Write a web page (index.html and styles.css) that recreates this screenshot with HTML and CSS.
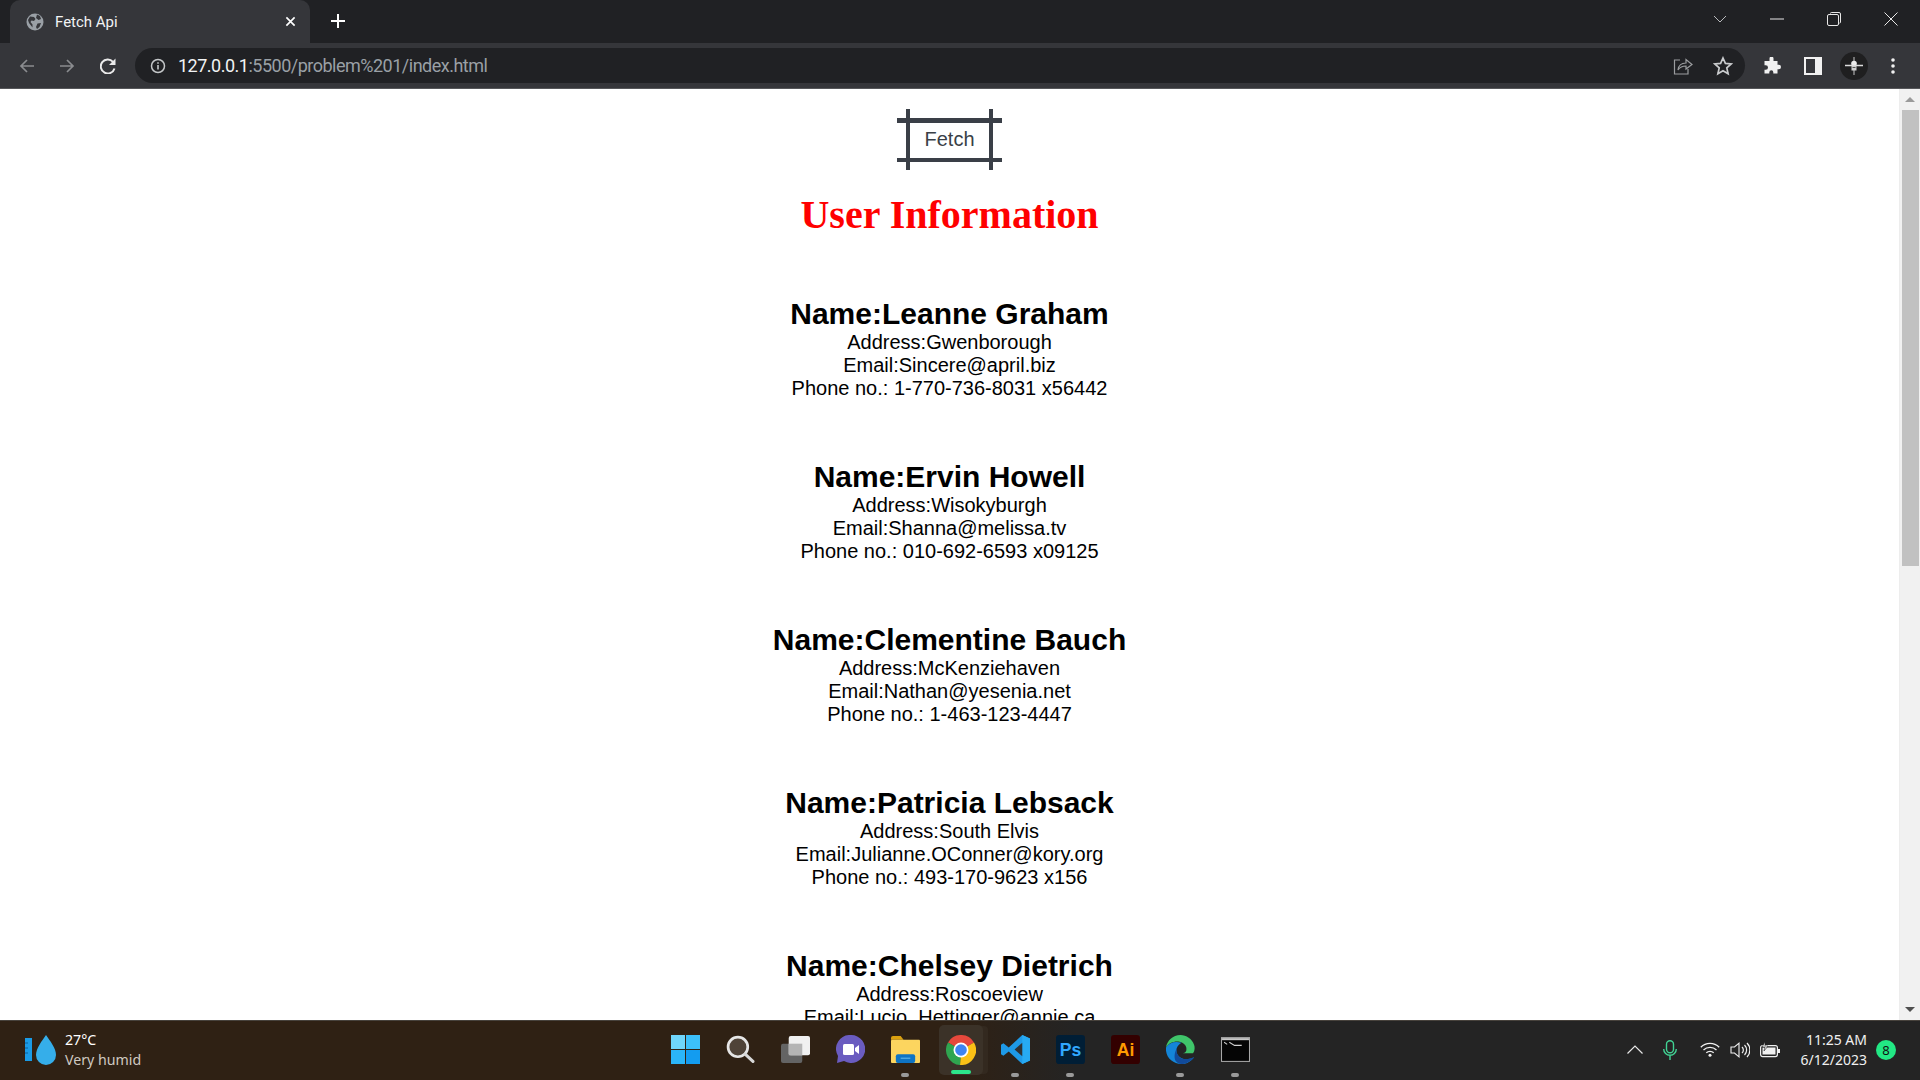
FILE: index.html
```html
<!DOCTYPE html>
<html lang="en">
<head>
<meta charset="utf-8">
<title>Fetch Api</title>
<link rel="stylesheet" href="styles.css">
</head>
<body>
<header class="chrome">
  <div class="titlebar">
    <div class="tab">
      <svg class="tab-fav" viewBox="0 0 18 18"><circle cx="9" cy="9" r="8.5" fill="#9aa0a6"/><path d="M4 3.500l4 .5 1.500 2-1.500 2-2.500-.5-1 1.500 2 2.500v3L3 10 2 7zM11 1.500l3 1.500 1 3-2.500 1L10 5zM11.500 10.500l3.500-.5-1.500 4-2.500 2-1-2z" fill="#35363a"/></svg>
      <span class="tab-title">Fetch Api</span>
      <svg class="tab-x" viewBox="0 0 12 12"><path d="M1.500 1.500l9 9M10.500 1.500l-9 9" stroke="#fff" stroke-width="1.800"/></svg>
    </div>
    <svg class="newtab" viewBox="0 0 16 16"><path d="M8 1v14M1 8h14" stroke="#fff" stroke-width="2"/></svg>
    <div class="winctl">
      <svg class="w-chev" viewBox="0 0 14 8"><path d="M1 1l6 6 6-6" fill="none" stroke="#b8babd" stroke-width="1"/></svg>
      <svg class="w-min" viewBox="0 0 14 2"><path d="M0 1h14" stroke="#e8e8e8" stroke-width="1"/></svg>
      <svg class="w-max" viewBox="0 0 14 14"><path d="M3.500 1.500V1a.8.8 0 0 1 .8-.5H12a1.500 1.500 0 0 1 1.500 1.500v8q0 1-1 1.200" fill="none" stroke="#e8e8e8"/><rect x=".5" y="2.500" width="11" height="11" rx="1.500" fill="none" stroke="#e8e8e8"/></svg>
      <svg class="w-close" viewBox="0 0 14 14"><path d="M.5.500l13 13M13.500.500l-13 13" stroke="#e8e8e8" stroke-width="1"/></svg>
    </div>
  </div>
  <div class="toolbar">
    <svg class="nav nav-back" viewBox="0 0 16 16"><path d="M15 8H2M8 2L2 8l6 6" fill="none" stroke="#8a8c8f" stroke-width="1.700"/></svg>
    <svg class="nav nav-fwd" viewBox="0 0 16 16"><path d="M1 8h13M8 2l6 6-6 6" fill="none" stroke="#8a8c8f" stroke-width="1.700"/></svg>
    <svg class="nav nav-reload" viewBox="0 0 16 16"><path d="M14.500 10.500A7 7 0 1 1 13 3.800" fill="none" stroke="#eaeaea" stroke-width="2"/><path d="M15.500 .5v6.500H9z" fill="#eaeaea"/></svg>
    <div class="omnibox">
      <svg class="info" viewBox="0 0 16 16"><circle cx="8" cy="8" r="6.500" fill="none" stroke="#c4c7c9" stroke-width="1.500"/><path d="M8 7v4.500M8 4.300v1.500" stroke="#c4c7c9" stroke-width="1.600"/></svg>
      <span class="url"><span class="url-host">127.0.0.1</span>:5500/problem%201/index.html</span>
      <svg class="share" viewBox="0 0 20 18"><path d="M7 3H1.500v14H15v-5" fill="none" stroke="#9b9d9f" stroke-width="1.200"/><path d="M5 13c.5-4.500 3.500-7 8-7V2.500L19 7.500 13 12V9c-3.500 0-6 1-8 4z" fill="none" stroke="#9b9d9f" stroke-width="1.200"/></svg>
      <svg class="star" viewBox="0 0 20 20"><path d="M10 2l2.400 5.400 5.800.6-4.400 3.900 1.300 5.800L10 14.700l-5.100 3 1.300-5.800L1.800 8l5.800-.6z" fill="none" stroke="#c9cbcd" stroke-width="1.700"/></svg>
    </div>
    <svg class="ext" viewBox="0 0 18 18"><path d="M6.500 1.500a2 2 0 0 1 4 0V4H14.500v3.800h1.300a2.200 2.200 0 0 1 0 4.400h-1.300v4.300H10.300v-1.200a2 2 0 0 0-4 0v1.200H1.500V12.800h1.200a2.300 2.300 0 0 0 0-4.600H1.500V4h5z" fill="#f1f1f1"/></svg>
    <svg class="side" viewBox="0 0 18 18"><rect width="18" height="18" fill="#f1f1f1"/><rect x="2" y="2" width="9" height="14" fill="#35363a"/></svg>
    <div class="avatar"><svg viewBox="0 0 20 20"><path d="M1 9.500h18" stroke="#dcdcdc" stroke-width="1.500"/><path d="M10 1v18" stroke="#8f8f8f" stroke-width="1.500"/><circle cx="10" cy="7.500" r="2.800" fill="#ececec"/><rect x="7.500" y="9.500" width="5" height="5" fill="#d0d0d0"/><path d="M8.500 11.500h3" stroke="#555" stroke-width="1"/></svg></div>
    <svg class="kebab" viewBox="0 0 4 16"><circle cx="2" cy="2" r="1.800" fill="#f1f1f1"/><circle cx="2" cy="8" r="1.800" fill="#f1f1f1"/><circle cx="2" cy="14" r="1.800" fill="#f1f1f1"/></svg>
  </div>
</header>

<div class="viewport">
  <main class="page">
    <button class="fetch" type="button">Fetch</button>
    <h1 class="title">User Information</h1>
    <section class="users">
      <article class="user"><h2>Name:Leanne Graham</h2><p>Address:Gwenborough</p><p>Email:Sincere@april.biz</p><p>Phone no.: 1-770-736-8031 x56442</p></article>
      <article class="user"><h2>Name:Ervin Howell</h2><p>Address:Wisokyburgh</p><p>Email:Shanna@melissa.tv</p><p>Phone no.: 010-692-6593 x09125</p></article>
      <article class="user"><h2>Name:Clementine Bauch</h2><p>Address:McKenziehaven</p><p>Email:Nathan@yesenia.net</p><p>Phone no.: 1-463-123-4447</p></article>
      <article class="user"><h2>Name:Patricia Lebsack</h2><p>Address:South Elvis</p><p>Email:Julianne.OConner@kory.org</p><p>Phone no.: 493-170-9623 x156</p></article>
      <article class="user"><h2>Name:Chelsey Dietrich</h2><p>Address:Roscoeview</p><p>Email:Lucio_Hettinger@annie.ca</p></article>
    </section>
  </main>
  <aside class="scrollbar">
    <span class="arrow arrow-up"></span>
    <div class="track"><div class="thumb"></div></div>
    <span class="arrow arrow-down"></span>
  </aside>
</div>

<footer class="taskbar">
  <div class="weather">
    <svg class="weather-ico" viewBox="0 0 31 32"><rect x="0" y="4" width="7" height="23" fill="#1a9be6"/><path d="M0 9h3M0 14h3M0 19h3" stroke="#0d5f9c" stroke-width="1"/><path d="M21 1c4 6 10 13 10 20a10 10 0 0 1-20 0C11 14 17 7 21 1z" fill="#35aeea"/></svg>
    <div class="weather-text"><span class="temp">27°C</span><span class="cond">Very humid</span></div>
  </div>
  <div class="apps">
    <div class="app"><svg viewBox="0 0 29 29"><rect width="14" height="14" fill="#6fd6fb"/><rect x="15" width="14" height="14" fill="#3cc0fa"/><rect y="15" width="14" height="14" fill="#2bb5f8"/><rect x="15" y="15" width="14" height="14" fill="#139cf0"/></svg></div>
    <div class="app"><svg viewBox="0 0 28 28"><circle cx="11.500" cy="11.500" r="9.500" fill="#4f4338" stroke="#e6e6e6" stroke-width="2.600"/><path d="M18.500 18.500l7.500 7" stroke="#d8d8d8" stroke-width="3" stroke-linecap="round"/></svg></div>
    <div class="app"><svg viewBox="0 0 30 28"><rect x="0" y="8" width="22" height="20" rx="2" fill="#646464"/><rect x="8" y="0" width="22" height="20" rx="2" fill="#f0f0f0"/><rect x="8" y="8" width="14" height="12" fill="#b4b4b4"/></svg></div>
    <div class="app"><svg viewBox="0 0 29 29"><path d="M15 0a14 14 0 1 1-7 26l-7 2 1-7A14 14 0 0 1 15 0z" fill="#6a5cc0"/><rect x="7" y="9" width="11" height="11" rx="1.500" fill="#fff"/><path d="M19 13l4-3v9l-4-3z" fill="#fff"/></svg></div>
    <div class="app app-running"><svg viewBox="0 0 30 28"><path d="M0 2a2 2 0 0 1 2-2h8l3 4h-13z" fill="#dba10f"/><rect y="4" width="30" height="24" rx="1" fill="#fcd55f"/><rect x="5" y="19" width="20" height="9" rx="2" fill="#0e74c4"/><path d="M10 23h10" stroke="#6cc0f0" stroke-width="1"/></svg></div>
    <div class="app app-active"><svg viewBox="0 0 30 30"><path d="M2 7.500A15 15 0 0 1 28 7.500L15 15z" fill="#e6483c"/><path d="M28 7.500A15 15 0 0 1 14 30L15 15z" fill="#fbc116"/><path d="M14 30A15 15 0 0 1 2 7.500L15 15z" fill="#2fa550"/><circle cx="15" cy="15" r="7.500" fill="#fff"/><circle cx="15" cy="15" r="5.800" fill="#3f84f1"/></svg></div>
    <div class="app app-running"><svg viewBox="0 0 30 30"><path d="M22 0l8 3.500v23L22 30 8 17l-5.500 4.500L0 20v-10l2.500-1.500L8 13z" fill="#1e9ae8"/><path d="M22 0l8 3.500v23L22 30z" fill="#27aaf3"/><path d="M22 8v14l-8-7z" fill="#2f3235"/></svg></div>
    <div class="app app-running"><svg viewBox="0 0 28 28"><rect width="28" height="28" rx="3" fill="#001e36"/><text class="badge-ps" x="14" y="20.500">Ps</text></svg></div>
    <div class="app"><svg viewBox="0 0 28 28"><rect width="28" height="28" rx="3" fill="#330000"/><text class="badge-ai" x="14" y="20.500">Ai</text></svg></div>
    <div class="app app-running"><svg viewBox="0 0 30 30"><path d="M15 0C7 0 1 6 0 13c3-5 9-7 14-6 5 1 8 5 7 9-1 3-4 3-6 3h13c2-3 2-7 1-9C27 4 21 0 15 0z" fill="#3fc56a"/><path d="M0 13C-1 23 7 30 16 30c6 0 10-3 13-7-4 2-9 3-13 1-4-2-6-6-5-10 1-3 3-5 5-6C9 6 3 8 0 13z" fill="#1485d8"/><path d="M11 14c-1 5 2 9 6 10.500 4 1 8 0 12-1.500-3 4-8 7-13 7-3 0-4-1-6-3-2-4-1-9 1-13z" fill="#114a9a"/></svg></div>
    <div class="app app-running"><svg viewBox="0 0 28 24"><rect width="28" height="24" fill="#a8a8a8"/><rect x="1" y="1" width="26" height="22" fill="#050505"/><rect x="1" y="1" width="26" height="2" fill="#c8c8c8"/><path d="M3 5l3 2M8 5l5 3h7" stroke="#d0d0d0" stroke-width="1" fill="none"/></svg></div>
  </div>
  <div class="tray">
    <svg class="t-chev" viewBox="0 0 16 9"><path d="M.5 8.500L8 1l7.500 7.500" fill="none" stroke="#e8e8e8" stroke-width="1.200"/></svg>
    <svg class="t-mic" viewBox="0 0 14 20"><rect x="3.500" y=".7" width="7" height="12" rx="3.500" fill="none" stroke="#41d394" stroke-width="1.400"/><path d="M.7 9a6.300 6.300 0 0 0 12.600 0M7 15v5" fill="none" stroke="#41d394" stroke-width="1.400"/></svg>
    <svg class="t-wifi" viewBox="0 0 20 15"><path d="M.8 5.200a13 13 0 0 1 18.400 0M3.500 8a9.300 9.300 0 0 1 13 0M6.300 10.800a5.300 5.300 0 0 1 7.400 0" fill="none" stroke="#f0f0f0" stroke-width="1.300"/><circle cx="10" cy="13.300" r="1.500" fill="#f0f0f0"/></svg>
    <svg class="t-vol" viewBox="0 0 20 16"><path d="M1 5h3.500L9 1.200v13.600L4.500 11H1z" fill="none" stroke="#f0f0f0" stroke-width="1.100"/><path d="M12 5a4 4 0 0 1 0 6M14.500 3a7 7 0 0 1 0 10M17 1a10 10 0 0 1 0 14" fill="none" stroke="#f0f0f0" stroke-width="1.200"/></svg>
    <svg class="t-bat" viewBox="0 0 20 16"><rect x=".6" y="3.600" width="16.800" height="11" rx="2" fill="none" stroke="#f0f0f0" stroke-width="1.200"/><rect x="2.500" y="5.500" width="13" height="7" fill="#f0f0f0"/><rect x="18" y="7" width="2" height="4" fill="#f0f0f0"/><path d="M5 0L2 5h3l-1 4 4-5H5z" fill="#f0f0f0" stroke="#232323" stroke-width=".6"/></svg>
    <div class="clock"><span>11:25 AM</span><span>6/12/2023</span></div>
    <span class="notif">8</span>
  </div>
</footer>
</body>
</html>
```
FILE: styles.css
```css
* { box-sizing: border-box; margin: 0; padding: 0; }
html, body { height: 100%; overflow: hidden; }
body { display: flex; flex-direction: column; background: #fff; font-family: "Liberation Sans", Arial, sans-serif; }
svg { display: block; flex: none; }

.chrome { flex: none; height: 89px; background: #35363a; border-bottom: 1px solid #56575a; }
.titlebar { height: 43px; background: #202124; display: flex; align-items: center; padding-left: 10px; }
.tab { width: 300px; height: 43px; background: #35363a; border-radius: 10px 10px 0 0; display: flex; align-items: center; padding: 0 14px 0 16px; color: #f1f3f4; }
.tab-fav { width: 18px; height: 18px; margin-right: 11px; }
.tab-title { flex: 1; font: 15px "Roboto", sans-serif; }
.tab-x { width: 11px; height: 11px; }
.newtab { width: 16px; height: 16px; margin-left: 20px; margin-bottom: 1px; }
.winctl { margin-left: auto; display: flex; align-items: center; height: 43px; padding-right: 22px; padding-bottom: 6px; }
.w-chev { width: 14px; height: 8px; margin-right: 43px; }
.w-min { width: 14px; height: 2px; margin-right: 43px; }
.w-max { width: 14px; height: 14px; margin-right: 43px; }
.w-close { width: 14px; height: 14px; }

.toolbar { height: 45px; display: flex; align-items: center; padding-left: 19px; }
.nav { width: 16px; height: 16px; }
.nav-back { margin-right: 24px; }
.nav-fwd { margin-right: 25px; }
.nav-reload { margin-right: 19px; }
.omnibox { width: 1610px; height: 35px; background: #202124; border-radius: 18px; display: flex; align-items: center; padding-left: 15px; padding-right: 12px; }
.info { width: 16px; height: 16px; margin-right: 12px; }
.url { flex: 1; font: 18px "Roboto", sans-serif; color: #9aa0a6; letter-spacing: -0.5px; }
.url-host { color: #f1f3f4; }
.share { width: 20px; height: 18px; margin-right: 20px; }
.star { width: 20px; height: 20px; }
.ext { width: 18px; height: 18px; margin-left: 18px; }
.side { width: 18px; height: 18px; margin-left: 23px; }
.avatar { width: 28px; height: 28px; margin-left: 18px; border-radius: 50%; background: #1f1f20; display: flex; align-items: center; justify-content: center; }
.avatar svg { width: 20px; height: 20px; }
.kebab { width: 4px; height: 16px; margin-left: 23px; }

.viewport { flex: 1; min-height: 0; display: flex; }
.page { flex: 1; min-width: 0; text-align: center; padding-top: 29px; overflow: hidden; color: #000; }
.fetch { position: relative; display: block; width: 105px; height: 44px; padding-bottom: 2px; margin: 0 auto; background: transparent; border: solid #3a3f47; border-width: 5px 0 4px; font: 20px "Liberation Sans", sans-serif; color: #3a3f47; }
.fetch::before, .fetch::after { content: ""; position: absolute; top: -14px; bottom: -12px; width: 4px; background: #3a3f47; }
.fetch::before { left: 9px; }
.fetch::after { right: 9px; }
.title { margin-top: 30px; font: bold 40px/46px "Liberation Serif", serif; color: #f00; }
.users { display: flex; flex-direction: column; gap: 60px; margin-top: 59px; }
.user h2 { font: bold 30px/34px "Liberation Sans", sans-serif; }
.user p { font: 20px/23px "Liberation Sans", sans-serif; }

.scrollbar { flex: none; width: 21px; background: #f1f1f1; display: flex; flex-direction: column; align-items: center; border-left: 1px solid #ededed; }
.track { flex: 1; width: 100%; padding: 0 1px; }
.thumb { width: 17px; height: 456px; background: #c1c1c1; margin: 0 auto; }
.arrow { flex: none; width: 0; height: 0; border-left: 5px solid transparent; border-right: 5px solid transparent; }
.arrow-up { border-bottom: 5px solid #9a9a9a; margin: 8px 0 8px; }
.arrow-down { border-top: 5px solid #505050; margin: 4px 0 8px; }

.taskbar { flex: none; height: 60px; padding-bottom: 2px; display: grid; grid-template-columns: 1fr auto 1fr; align-items: center; background: linear-gradient(90deg, #2f2114 0, #2f2114 50%, #242424 56%, #242424 100%); border-top: 1px solid #47423c; color: #fff; font-family: "Noto Sans", sans-serif; }
.weather { display: flex; align-items: center; padding-left: 25px; }
.weather-ico { width: 31px; height: 32px; margin-right: 9px; }
.weather-text { display: flex; flex-direction: column; font-size: 14.2px; line-height: 20px; }
.temp { color: #fff; }
.cond { color: #cfc9c1; }
.apps { display: flex; align-items: center; }
.app { position: relative; width: 55px; height: 54px; display: flex; align-items: center; justify-content: center; }
.app svg { width: 29px; height: 29px; }
.app-running::after, .app-active::after { content: ""; position: absolute; bottom: 0; left: 50%; transform: translateX(-50%); height: 4px; border-radius: 2px; }
.app-running::after { width: 8px; background: #9a9a9a; }
.app-active { background: #3b3228; border-radius: 5px; width: 44px; margin: 0 5px 0 6px; height: 50px; box-shadow: 6px 0 0 -1px #33291f; }
.app-active svg { width: 30px; height: 30px; }
.app-active::after { width: 20px; bottom: 1px; background: #2ce68a; }
.badge-ps, .badge-ai { font: bold 17px "Liberation Sans", sans-serif; text-anchor: middle; }
.badge-ps { fill: #31a8ff; }
.badge-ai { fill: #ff9a00; }

.tray { display: flex; align-items: center; justify-content: flex-end; padding-right: 26px; }
.t-chev { width: 16px; height: 9px; margin-right: 20px; }
.t-mic { width: 14px; height: 20px; margin-right: 23px; }
.t-wifi { width: 20px; height: 15px; margin-right: 10px; }
.t-vol { width: 20px; height: 16px; margin-right: 10px; }
.t-bat { width: 20px; height: 16px; margin-right: 21px; }
.clock { display: flex; flex-direction: column; align-items: flex-end; font-size: 14px; line-height: 20px; color: #f0f0f0; margin-right: 9px; }
.notif { width: 20px; height: 20px; border-radius: 50%; background: #22e884; color: #111; font-size: 13px; display: flex; align-items: center; justify-content: center; margin-right: -2px; }
```
